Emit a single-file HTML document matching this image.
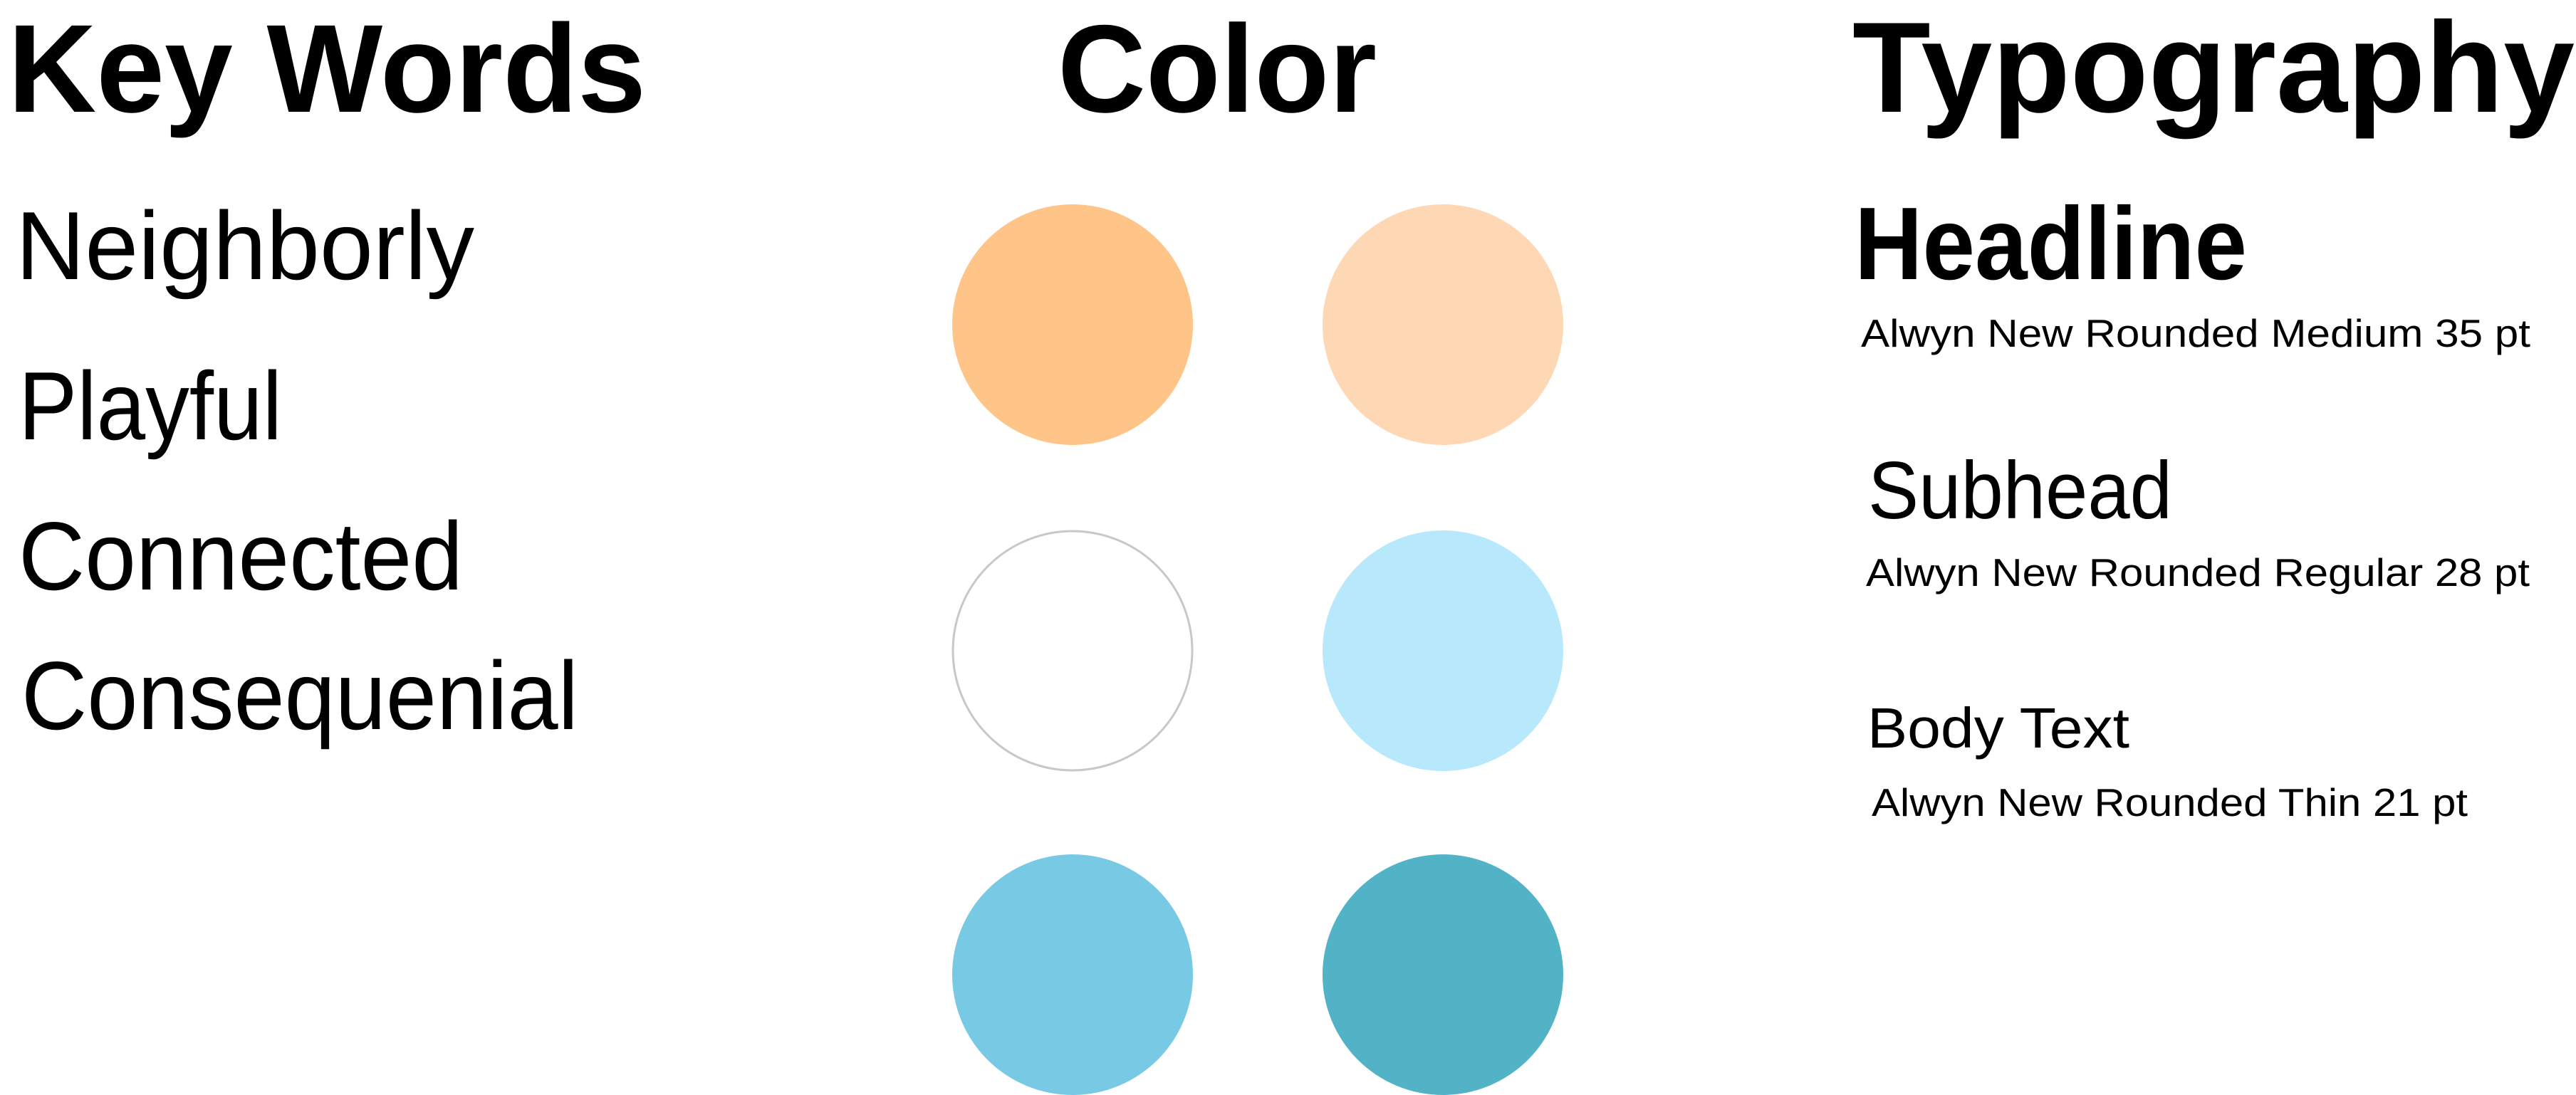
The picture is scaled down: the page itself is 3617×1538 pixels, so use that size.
<!DOCTYPE html>
<html><head><meta charset="utf-8"><style>
html,body{margin:0;padding:0;background:#fff;}
svg{display:block}
</style></head><body>
<svg width="3617" height="1538" viewBox="0 0 3617 1538" xmlns="http://www.w3.org/2000/svg" font-family="Liberation Sans, sans-serif">
<rect width="3617" height="1538" fill="#fff"/>
<g font-weight="bold" fill="#000">
<text x="11" y="157" font-size="176" textLength="896" lengthAdjust="spacingAndGlyphs">Key Words</text>
<text x="1485" y="157" font-size="175" textLength="448" lengthAdjust="spacingAndGlyphs">Color</text>
<text x="2601" y="157" font-size="181" textLength="1014" lengthAdjust="spacingAndGlyphs">Typography</text>
</g>
<g fill="#000" font-size="136">
<text x="22" y="392" textLength="644" lengthAdjust="spacingAndGlyphs">Neighborly</text>
<text x="26" y="617" textLength="370" lengthAdjust="spacingAndGlyphs">Playful</text>
<text x="26" y="828" textLength="624" lengthAdjust="spacingAndGlyphs">Connected</text>
<text x="30" y="1024" textLength="782" lengthAdjust="spacingAndGlyphs">Consequenial</text>
</g>
<circle cx="1506" cy="456" r="169" fill="#fec488"/>
<circle cx="2026" cy="456" r="169" fill="#fed8b5"/>
<circle cx="1506" cy="914" r="168" fill="#fff" stroke="#c8c8c8" stroke-width="3"/>
<circle cx="2026" cy="914" r="169" fill="#b7e8fc"/>
<circle cx="1506" cy="1369" r="169" fill="#78c9e4"/>
<circle cx="2026" cy="1369" r="169" fill="#52b2c6"/>
<g fill="#000">
<text x="2604" y="392" font-size="145" font-weight="bold" textLength="551" lengthAdjust="spacingAndGlyphs">Headline</text>
<text x="2613" y="487" font-size="55" textLength="940" lengthAdjust="spacingAndGlyphs">Alwyn New Rounded Medium 35 pt</text>
<text x="2623" y="728" font-size="114" textLength="427" lengthAdjust="spacingAndGlyphs">Subhead</text>
<text x="2620" y="823" font-size="55" textLength="932" lengthAdjust="spacingAndGlyphs">Alwyn New Rounded Regular 28 pt</text>
<text x="2622" y="1050" font-size="80" textLength="368" lengthAdjust="spacingAndGlyphs">Body Text</text>
<text x="2628" y="1146" font-size="55" textLength="837" lengthAdjust="spacingAndGlyphs">Alwyn New Rounded Thin 21 pt</text>
</g>
</svg>
</body></html>
